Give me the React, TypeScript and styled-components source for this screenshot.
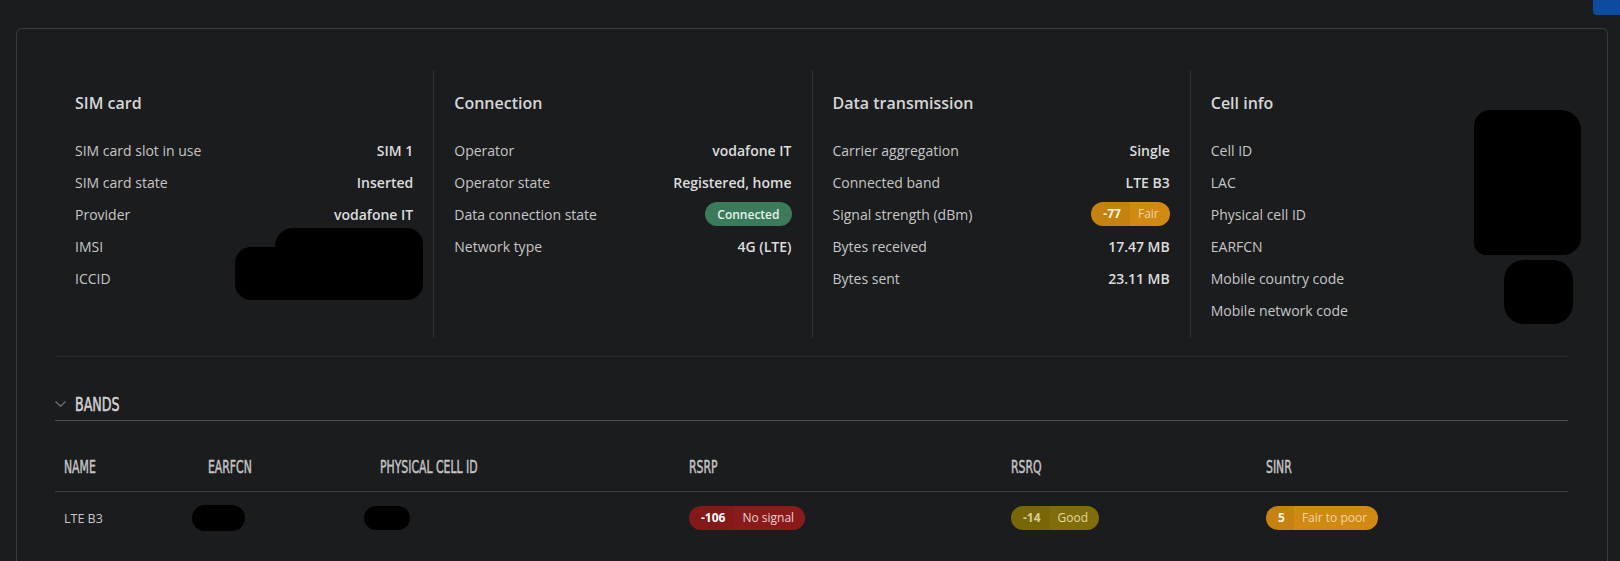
import React from 'react';
import styled, {createGlobalStyle} from 'styled-components';

type Tone = 'red' | 'olive' | 'orange';

type Signal = {
    value: string;
    label: string;
    tone: Tone;
};

type InfoRow = {
    label: string;
    value?: string;
    badge?: 'connected' | Signal;
};

type Section = {
    title: string;
    rows: InfoRow[];
};

const sections: Section[] = [
    {
        title: 'SIM card',
        rows: [
            {label: 'SIM card slot in use', value: 'SIM 1'},
            {label: 'SIM card state', value: 'Inserted'},
            {label: 'Provider', value: 'vodafone IT'},
            {label: 'IMSI'},
            {label: 'ICCID'},
        ],
    },
    {
        title: 'Connection',
        rows: [
            {label: 'Operator', value: 'vodafone IT'},
            {label: 'Operator state', value: 'Registered, home'},
            {label: 'Data connection state', badge: 'connected'},
            {label: 'Network type', value: '4G (LTE)'},
        ],
    },
    {
        title: 'Data transmission',
        rows: [
            {label: 'Carrier aggregation', value: 'Single'},
            {label: 'Connected band', value: 'LTE B3'},
            {label: 'Signal strength (dBm)', badge: {value: '-77', label: 'Fair', tone: 'orange'}},
            {label: 'Bytes received', value: '17.47 MB'},
            {label: 'Bytes sent', value: '23.11 MB'},
        ],
    },
    {
        title: 'Cell info',
        rows: [
            {label: 'Cell ID'},
            {label: 'LAC'},
            {label: 'Physical cell ID'},
            {label: 'EARFCN'},
            {label: 'Mobile country code'},
            {label: 'Mobile network code'},
        ],
    },
];

const bandColumns = ['NAME', 'EARFCN', 'PHYSICAL CELL ID', 'RSRP', 'RSRQ', 'SINR'];

// black marker strokes hiding private values in the screenshot
const redactions: Record<number, { left: number; top: number; width: number; height: number; radius: string }[]> = {
    0: [
        {left: 220, top: 158, width: 148, height: 72, radius: '18px 16px 16px 14px'},
        {left: 180, top: 177, width: 72, height: 53, radius: '16px'},
    ],
    3: [
        {left: 283, top: 40, width: 107, height: 145, radius: '16px 20px 18px 12px'},
        {left: 313, top: 190, width: 69, height: 64, radius: '20px'},
    ],
};

const toneColors: Record<Tone, { bg: string; value: string; label: string }> = {
    red: {bg: '#8b1b1b', value: '#ffffff', label: '#ead2d2'},
    olive: {bg: '#7e6d08', value: '#d9ce93', label: '#e2d8a6'},
    orange: {bg: '#d08912', value: '#fff4e0', label: '#f2d7a2'},
};

const GlobalStyle = createGlobalStyle`
  html, body {
    margin: 0;
    padding: 0;
    background-color: #1b1c1e;
    overflow: hidden;
  }
  body {
    font-family: "Open Sans", "Liberation Sans", sans-serif;
    color: #c9c9c9;
  }
`;

const SignalBadge = ({signal}: { signal: Signal }) => (
    <Badge $tone={signal.tone}>
        <BadgeValue $tone={signal.tone}>{signal.value}</BadgeValue>
        <BadgeLabel $tone={signal.tone}>{signal.label}</BadgeLabel>
    </Badge>
);

const App = () => {
    return (
        <Page>
            <GlobalStyle/>
            <TopBar>
                <CornerButton/>
            </TopBar>
            <Card>
                <Columns>
                    {sections.map((section, index) => (
                        <Column key={section.title}>
                            <ColumnTitle>{section.title}</ColumnTitle>
                            {section.rows.map((row) => (
                                <Row key={row.label}>
                                    <Label>{row.label}</Label>
                                    {row.value && <Value>{row.value}</Value>}
                                    {row.badge === 'connected' && <StateBadge>Connected</StateBadge>}
                                    {row.badge && row.badge !== 'connected' && <SignalBadge signal={row.badge}/>}
                                </Row>
                            ))}
                            {(redactions[index] || []).map((r, i) => (
                                <Redaction key={i} style={{left: r.left, top: r.top, width: r.width, height: r.height, borderRadius: r.radius}}/>
                            ))}
                        </Column>
                    ))}
                </Columns>
                <Separator/>
                <BandsHeader>
                    <svg width="11" height="6" viewBox="0 0 11 6" fill="none">
                        <polyline points="0.5,0.5 5.5,5.3 10.5,0.5" stroke="#707174" strokeWidth="1.2"/>
                    </svg>
                    <BandsTitle>BANDS</BandsTitle>
                </BandsHeader>
                <Table>
                    {bandColumns.map((name) => (
                        <HeadCell key={name}><HeadText>{name}</HeadText></HeadCell>
                    ))}
                    <Cell>LTE B3</Cell>
                    <Cell><Blot $width={53} $height={26}/></Cell>
                    <Cell><Blot $width={46} $height={24}/></Cell>
                    <Cell><SignalBadge signal={{value: '-106', label: 'No signal', tone: 'red'}}/></Cell>
                    <Cell><SignalBadge signal={{value: '-14', label: 'Good', tone: 'olive'}}/></Cell>
                    <Cell><SignalBadge signal={{value: '5', label: 'Fair to poor', tone: 'orange'}}/></Cell>
                </Table>
            </Card>
        </Page>
    );
};

const Page = styled.div`
  padding: 0 12px 0 16px;
  height: 561px;
  box-sizing: border-box;
  overflow: hidden;
`;

const TopBar = styled.div`
  height: 28px;
  display: flex;
  justify-content: flex-end;
`;

const CornerButton = styled.button`
  width: 40px;
  height: 30px;
  margin-top: -15px;
  margin-right: -25px;
  border: none;
  border-radius: 4px;
  background-color: #0c4c9c;
`;

const Card = styled.div`
  border: 1px solid #3a3b3e;
  border-bottom: none;
  border-radius: 6px 6px 0 0;
  padding: 41px 39px 0 38px;
  height: 540px;
  box-sizing: border-box;
`;

const Columns = styled.div`
  display: grid;
  grid-template-columns: repeat(4, 1fr);
`;

const Column = styled.div`
  position: relative;
  padding: 22px 20px 12px;

  & + & {
    border-left: 1px solid #303134;
  }
`;

const ColumnTitle = styled.h3`
  margin: 0 0 20px;
  font-size: 16px;
  line-height: 22px;
  font-weight: 600;
  color: #d6d6d6;
`;

const Row = styled.div`
  height: 32px;
  display: flex;
  align-items: center;
  justify-content: space-between;
`;

const Label = styled.span`
  font-size: 14px;
  color: #c6c6c6;
`;

const Value = styled.span`
  font-size: 14px;
  font-weight: 600;
  color: #dcdcdc;
`;

const StateBadge = styled.span`
  display: inline-flex;
  align-items: center;
  height: 24px;
  padding: 0 12px;
  border-radius: 12px;
  background-color: #3b7a5a;
  color: #e6f1ea;
  font-size: 12px;
  font-weight: 600;
`;

const Badge = styled.span<{ $tone: Tone }>`
  display: inline-flex;
  align-items: stretch;
  height: 24px;
  border-radius: 12px;
  overflow: hidden;
  font-size: 12px;
  line-height: 24px;
  background-color: ${(p) => toneColors[p.$tone].bg};
`;

const BadgeValue = styled.span<{ $tone: Tone }>`
  padding: 0 9px 0 12px;
  font-weight: 700;
  color: ${(p) => toneColors[p.$tone].value};
  background-color: rgba(0, 0, 0, 0.05);
`;

const BadgeLabel = styled.span<{ $tone: Tone }>`
  padding: 0 11px 0 8px;
  color: ${(p) => toneColors[p.$tone].label};
`;

const Redaction = styled.div`
  position: absolute;
  background-color: #000;
`;

const Separator = styled.div`
  margin-top: 18px;
  height: 1px;
  background-color: #262729;
`;

const BandsHeader = styled.div`
  margin-top: 36px;
  height: 22px;
  padding-bottom: 5px;
  display: flex;
  align-items: center;
  gap: 9px;
  border-bottom: 1px solid #4d4e51;
`;

/* condensed display face: squeeze the installed condensed sans to the tall, narrow look */
const BandsTitle = styled.span`
  display: inline-block;
  font-family: "DejaVu Sans Condensed", "Liberation Sans Narrow", sans-serif;
  font-size: 19px;
  line-height: 22px;
  color: #d2d2d2;
  -webkit-text-stroke: 0.5px #d2d2d2;
  transform: scaleX(0.74);
  transform-origin: left center;
`;

const Table = styled.div`
  display: grid;
  grid-template-columns: 144px 172px 309px 322px 255px 1fr;
`;

const HeadCell = styled.div`
  padding: 36px 0 14px 9px;
  line-height: 20px;
  border-bottom: 1px solid #3e3f42;
`;

const HeadText = styled.span`
  display: inline-block;
  font-family: "DejaVu Sans Condensed", "Liberation Sans Narrow", sans-serif;
  font-size: 17px;
  color: #c4c4c4;
  -webkit-text-stroke: 0.45px #c4c4c4;
  white-space: nowrap;
  transform: scaleX(0.71);
  transform-origin: left center;
`;

const Cell = styled.div`
  padding: 14px 0 14px 9px;
  height: 24px;
  display: flex;
  align-items: center;
  font-size: 12.5px;
  color: #c9c9c9;
`;

const Blot = styled.span<{ $width: number; $height: number }>`
  display: inline-block;
  margin-left: -16px;
  width: ${(p) => p.$width}px;
  height: ${(p) => p.$height}px;
  border-radius: ${(p) => p.$height / 2}px;
  background-color: #000;
`;

export default App;
